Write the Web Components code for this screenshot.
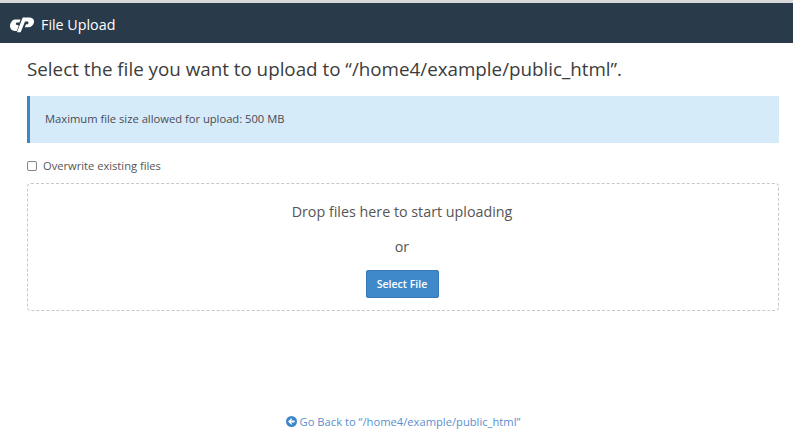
<!DOCTYPE html>
<html>
<head>
<meta charset="utf-8">
<title>File Upload</title>
<style>
    html, body { margin: 0; padding: 0; background: #fff; }
    body { font-family: "Open Sans", sans-serif; color: #333; }
</style>
</head>
<body>
<upload-header>File Upload</upload-header>
<upload-page>
    <upload-title>Select the file you want to upload to “/home4/example/public_html”.</upload-title>
    <upload-alert>Maximum file size allowed for upload: 500 MB</upload-alert>
    <upload-check>Overwrite existing files</upload-check>
    <upload-drop></upload-drop>
    <upload-back>Go Back to “/home4/example/public_html”</upload-back>
</upload-page>
<script>
class UploadHeader extends HTMLElement {
    constructor() {
        super();
        this.attachShadow({mode: 'open'});
        this.shadowRoot.innerHTML = `
        <style>
            :host {
                display: flex;
                align-items: center;
                box-sizing: border-box;
                height: 43px;
                border-top: 3px solid #d9d9d9;
                background: #293a4a;
                color: #fff;
                font-size: 14.3px;
                padding-left: 10px;
            }
            .name { padding-top: 2px; }
            svg { margin-right: 7px; margin-top: 3px; display: block; }
        </style>
        <svg width="24" height="16" viewBox="0 0 24 16">
            <path fill="#fff" d="M5 2.400h5.600L9.400 5.400H7C5.700 5.400 5.400 7.900 6.900 7.900h.6c1 0 1.300.9.900 1.800l-1.600 4.200H5C.6 13.900-1.100 9.800.6 6.200 1.600 3.900 3.200 2.400 5 2.400z"/>
            <path fill="#fff" d="M12.700.4h6.600c3.500 0 5.300 2.500 4.600 5.300-.6 2.600-2.900 4.600-5.700 4.600h-3.400l1.200-3h1.300c1.400 0 1.700-2.900.1-2.900h-2.400L10.700 15.300H6.900L12.700.4z"/>
        </svg>
        <span class="name"><slot></slot></span>`;
    }
}

class UploadPage extends HTMLElement {
    constructor() {
        super();
        this.attachShadow({mode: 'open'});
        this.shadowRoot.innerHTML = `
        <style>
            :host {
                display: flex;
                flex-direction: column;
                padding: 0 14px 0 27px;
            }
        </style>
        <slot></slot>`;
    }
}

class UploadTitle extends HTMLElement {
    constructor() {
        super();
        this.attachShadow({mode: 'open'});
        this.shadowRoot.innerHTML = `
        <style>
            :host {
                display: block;
                font-size: 18.8px;
                line-height: 26px;
                margin-top: 13px;
                color: #3c3c3c;
                white-space: nowrap;
            }
        </style>
        <slot></slot>`;
    }
}

class UploadAlert extends HTMLElement {
    constructor() {
        super();
        this.attachShadow({mode: 'open'});
        this.shadowRoot.innerHTML = `
        <style>
            :host {
                display: flex;
                align-items: center;
                box-sizing: border-box;
                height: 47px;
                margin-top: 14px;
                padding: 0 0 2px 15px;
                border-left: 3px solid #3d87c5;
                background: #d6ebf9;
                color: #4a4a55;
                font-size: 11.2px;
            }
        </style>
        <slot></slot>`;
    }
}

class UploadCheck extends HTMLElement {
    constructor() {
        super();
        this.attachShadow({mode: 'open'});
        this.shadowRoot.innerHTML = `
        <style>
            :host {
                display: flex;
                align-items: center;
                height: 16px;
                margin-top: 14px;
                color: #555;
                font-size: 11.15px;
            }
            i {
                box-sizing: border-box;
                width: 10px;
                height: 10px;
                margin: 1px 6px 0 0;
                border: 1px solid #858585;
                border-radius: 2px;
                background: #fff;
            }
        </style>
        <i></i><slot></slot>`;
    }
}

class UploadDrop extends HTMLElement {
    constructor() {
        super();
        this.attachShadow({mode: 'open'});
        this.shadowRoot.innerHTML = `
        <style>
            :host {
                display: flex;
                flex-direction: column;
                align-items: center;
                box-sizing: border-box;
                height: 128px;
                margin-top: 10px;
                padding-right: 2px;
                border: 1px dashed #c8c8c8;
                border-radius: 4px;
                color: #555;
                font-size: 14.3px;
            }
            .drop { margin-top: 18px; line-height: 20px; }
            .or { margin-top: 15px; line-height: 20px; }
            button {
                box-sizing: border-box;
                width: 73px;
                height: 28px;
                margin-top: 13px;
                padding: 0;
                border: 1px solid #3578b5;
                border-radius: 2px;
                background: #3f89ca;
                color: #fff;
                font: 600 10.5px "Open Sans", sans-serif;
            }
        </style>
        <div class="drop">Drop files here to start uploading</div>
        <div class="or">or</div>
        <button>Select File</button>`;
    }
}

class UploadBack extends HTMLElement {
    constructor() {
        super();
        this.attachShadow({mode: 'open'});
        this.shadowRoot.innerHTML = `
        <style>
            :host {
                display: flex;
                align-items: center;
                justify-content: center;
                height: 16px;
                margin-top: 102px;
                color: #5a8fcf;
                font-size: 11.2px;
            }
            svg { margin-right: 3px; display: block; }
        </style>
        <svg width="11" height="11" viewBox="0 0 11 11">
            <circle cx="5.500" cy="5.500" r="5.500" fill="#3d87c8"/>
            <path fill="#fff" d="M5.300 2.200l.9.9-1.500 1.500h3.900v1.800H4.700l1.500 1.500-.9.9-3.200-3.300z"/>
        </svg>
        <slot></slot>`;
    }
}

customElements.define('upload-header', UploadHeader);
customElements.define('upload-page', UploadPage);
customElements.define('upload-title', UploadTitle);
customElements.define('upload-alert', UploadAlert);
customElements.define('upload-check', UploadCheck);
customElements.define('upload-drop', UploadDrop);
customElements.define('upload-back', UploadBack);
</script>
</body>
</html>
